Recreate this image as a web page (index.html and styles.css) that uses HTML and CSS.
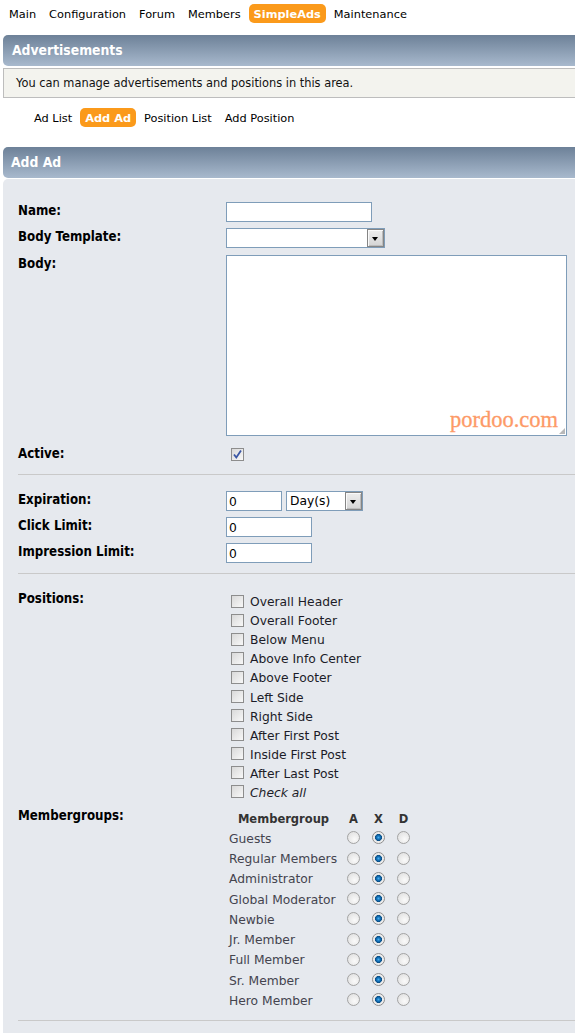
FILE: index.html
```html
<!DOCTYPE html>
<html>
<head>
<meta charset="utf-8">
<title>SimpleAds - Add Ad</title>
<link rel="stylesheet" href="styles.css">
</head>
<body>
<nav class="topnav">
  <a href="#">Main</a>
  <a href="#">Configuration</a>
  <a href="#">Forum</a>
  <a href="#">Members</a>
  <a href="#" class="active">SimpleAds</a>
  <a href="#">Maintenance</a>
</nav>
<div class="page">
  <h3 class="catbar">Advertisements</h3>
  <p class="info">You can manage advertisements and positions in this area.</p>
  <nav class="tabs">
    <a href="#">Ad List</a>
    <a href="#" class="active">Add Ad</a>
    <a href="#">Position List</a>
    <a href="#">Add Position</a>
  </nav>
  <h3 class="catbar catbar-sub">Add Ad</h3>
  <form class="panel">
    <div class="row">
      <label class="lbl">Name:</label>
      <input type="text" class="field w-name">
    </div>
    <div class="row row-gap7">
      <label class="lbl">Body Template:</label>
      <span class="select w-tpl"><span class="select-text"></span><span class="arrow"></span></span>
    </div>
    <div class="row row-gap9">
      <label class="lbl">Body:</label>
      <span class="area-wrap">
        <textarea class="area"></textarea>
        <span class="watermark">pordoo.com</span>
        <span class="grip"></span>
      </span>
    </div>
    <div class="row row-check">
      <label class="lbl">Active:</label>
      <span class="cb checked"><svg viewBox="0 0 11 11" width="11" height="11"><path d="M2 5.5 L4.3 8.5 L9 1.5" fill="none" stroke="#3a56a5" stroke-width="1.8"/></svg></span>
    </div>
    <hr class="sep sep1">
    <div class="row">
      <label class="lbl">Expiration:</label>
      <span class="inline">
        <input type="text" class="field w-exp" value="0">
        <span class="select w-unit"><span class="select-text">Day(s)</span><span class="arrow"></span></span>
      </span>
    </div>
    <div class="row">
      <label class="lbl">Click Limit:</label>
      <input type="text" class="field w-lim" value="0">
    </div>
    <div class="row row-last">
      <label class="lbl">Impression Limit:</label>
      <input type="text" class="field w-lim" value="0">
    </div>
    <hr class="sep sep2">
    <div class="row row-pos">
      <label class="lbl">Positions:</label>
      <ul class="poslist">
        <li><span class="cb"></span><span class="pt">Overall Header</span></li>
        <li><span class="cb"></span><span class="pt">Overall Footer</span></li>
        <li><span class="cb"></span><span class="pt">Below Menu</span></li>
        <li><span class="cb"></span><span class="pt">Above Info Center</span></li>
        <li><span class="cb"></span><span class="pt">Above Footer</span></li>
        <li><span class="cb"></span><span class="pt">Left Side</span></li>
        <li><span class="cb"></span><span class="pt">Right Side</span></li>
        <li><span class="cb"></span><span class="pt">After First Post</span></li>
        <li><span class="cb"></span><span class="pt">Inside First Post</span></li>
        <li><span class="cb"></span><span class="pt">After Last Post</span></li>
        <li><span class="cb"></span><em class="pt">Check all</em></li>
      </ul>
    </div>
    <div class="row row-mg">
      <label class="lbl">Membergroups:</label>
      <div class="mgtable">
        <div class="th th-name">Membergroup</div><div class="th">A</div><div class="th">X</div><div class="th">D</div>
        <div class="mg">Guests</div><div class="rc"><span class="rd"></span></div><div class="rc"><span class="rd on"></span></div><div class="rc"><span class="rd"></span></div>
        <div class="mg">Regular Members</div><div class="rc"><span class="rd"></span></div><div class="rc"><span class="rd on"></span></div><div class="rc"><span class="rd"></span></div>
        <div class="mg">Administrator</div><div class="rc"><span class="rd"></span></div><div class="rc"><span class="rd on"></span></div><div class="rc"><span class="rd"></span></div>
        <div class="mg">Global Moderator</div><div class="rc"><span class="rd"></span></div><div class="rc"><span class="rd on"></span></div><div class="rc"><span class="rd"></span></div>
        <div class="mg">Newbie</div><div class="rc"><span class="rd"></span></div><div class="rc"><span class="rd on"></span></div><div class="rc"><span class="rd"></span></div>
        <div class="mg">Jr. Member</div><div class="rc"><span class="rd"></span></div><div class="rc"><span class="rd on"></span></div><div class="rc"><span class="rd"></span></div>
        <div class="mg">Full Member</div><div class="rc"><span class="rd"></span></div><div class="rc"><span class="rd on"></span></div><div class="rc"><span class="rd"></span></div>
        <div class="mg">Sr. Member</div><div class="rc"><span class="rd"></span></div><div class="rc"><span class="rd on"></span></div><div class="rc"><span class="rd"></span></div>
        <div class="mg">Hero Member</div><div class="rc"><span class="rd"></span></div><div class="rc"><span class="rd on"></span></div><div class="rc"><span class="rd"></span></div>
      </div>
    </div>
    <hr class="sep sep3">
  </form>
</div>
</body>
</html>
```

FILE: styles.css
```css
html, body {
  margin: 0;
  padding: 0;
  background: #fff;
}
body {
  width: 575px;
  overflow: hidden;
  font-family: "DejaVu Sans", Verdana, sans-serif;
  color: #000;
}

/* top menu */
.topnav {
  display: flex;
  padding: 4px 0 0 4px;
  height: 19px;
  margin-bottom: 12px;
}
.topnav a, .tabs a {
  display: block;
  box-sizing: border-box;
  padding: 2px 5px 0;
  margin-right: 3px;
  line-height: 17px;
  height: 19px;
  font-size: 11.35px;
  color: #000;
  text-decoration: none;
  border-radius: 5px;
  white-space: nowrap;
}
.topnav a.active, .tabs a.active {
  background: #fb9a1b;
  color: #fff;
  font-weight: bold;
}

.page {
  margin-left: 3px;
  width: 600px;
}

/* category bars */
.catbar {
  margin: 0;
  height: 31px;
  line-height: 31px;
  padding-left: 9px;
  background: linear-gradient(#6d8198, #a8b9cd);
  color: #fff;
  font-family: "DejaVu Sans Condensed", "DejaVu Sans", sans-serif;
  font-stretch: condensed;
  font-size: 13.8px;
  font-weight: bold;
  border-radius: 5px 0 0 5px;
}
.catbar-sub {
  padding-left: 8px;
}

.info {
  margin: 2px 0 0;
  border: 1px solid #bdbdbd;
  border-right: 0;
  background: #f3f3ee;
  line-height: 27px;
  padding: 1px 0 0 12px;
  font-size: 11.4px;
  color: #111;
}

.tabs {
  display: flex;
  margin: 10px 0 20px;
  padding-left: 26px;
}

/* panel */
.panel {
  margin-top: 1px;
  background: #e6e9ee;
  padding: 23px 0 20px 15px;
  border-radius: 5px 0 0 0;
}
.row {
  display: flex;
  align-items: flex-start;
  margin-bottom: 6px;
}
.row-gap7 { margin-bottom: 7px; }
.row-gap9 { margin-bottom: 9px; }
.row-last { margin-bottom: 0; }
.lbl {
  flex: 0 0 208px;
  width: 208px;
  box-sizing: border-box;
  padding-top: 1px;
  line-height: 16px;
  font-family: "DejaVu Sans Condensed", "DejaVu Sans", sans-serif;
  font-stretch: condensed;
  font-weight: bold;
  font-size: 13.2px;
  color: #000;
}

.field {
  box-sizing: border-box;
  height: 20px;
  margin: 0;
  padding: 1px 2px 0;
  border: 1px solid #7f9db9;
  background: #fff;
  font-family: "DejaVu Sans", Verdana, sans-serif;
  font-size: 12.3px;
  color: #000;
  outline: none;
}
.w-name { width: 146px; }
.w-exp { width: 56px; }
.w-lim { width: 86px; }

.inline {
  display: flex;
  gap: 4px;
}

.select {
  position: relative;
  box-sizing: border-box;
  display: block;
  height: 20px;
  border: 1px solid #7f9db9;
  background: #fff;
  font-size: 12.3px;
  line-height: 19px;
}
.select-text {
  padding-left: 3px;
}
.w-tpl { width: 159px; }
.w-unit { width: 77px; }
.select .arrow {
  position: absolute;
  top: 0;
  right: 0;
  width: 17px;
  height: 18px;
  box-sizing: border-box;
  border: 1px solid #858585;
  box-shadow: inset 1px 1px 0 #fafafa, inset -1px -1px 0 #bcbcbc;
  background: linear-gradient(#eeeeee, #d4d4d4);
}
.select .arrow::after {
  content: "";
  position: absolute;
  left: 4px;
  top: 7px;
  border-left: 3.5px solid transparent;
  border-right: 3.5px solid transparent;
  border-top: 4px solid #000;
}

.area-wrap {
  position: relative;
  display: block;
}
.area {
  display: block;
  box-sizing: border-box;
  width: 341px;
  height: 181px;
  margin: 0;
  border: 1px solid #7f9db9;
  background: #fff;
  resize: none;
  outline: none;
}
.watermark {
  position: absolute;
  right: 9px;
  bottom: 3px;
  font-family: "Liberation Serif", "Times New Roman", serif;
  font-size: 22.5px;
  color: #fd9a67;
  -webkit-text-stroke: 0.3px #fd9a67;
}
.grip {
  position: absolute;
  right: 2px;
  bottom: 2px;
  width: 6px;
  height: 6px;
  background:
    radial-gradient(circle, #b8b8b8 0.8px, transparent 1px) 0 0 / 2px 2px;
  clip-path: polygon(100% 0, 100% 100%, 0 100%);
}

/* checkboxes */
.cb {
  display: inline-block;
  flex: 0 0 13px;
  box-sizing: border-box;
  width: 13px;
  height: 13px;
  border: 1px solid #8d8d8d;
  background: linear-gradient(135deg, #d9d9d9, #f8f8f8);
  vertical-align: middle;
}
.cb svg {
  display: block;
}
.row-check {
  height: 16px;
  margin-bottom: 0;
}
.row-check .cb {
  margin: 3px 0 0 5px;
}

.sep {
  border: 0;
  border-top: 1px solid #c9c9c9;
  height: 0;
  margin: 13px 0 16px;
}
.sep2 { margin-top: 10px; }
.sep3 { margin: 10px 0 0; }

.row-pos {
  margin-bottom: 5px;
}
.poslist {
  list-style: none;
  margin: 1.5px 0 0;
  padding: 0;
}
.poslist li {
  display: flex;
  align-items: center;
  height: 19.1px;
  font-size: 12.3px;
  color: #1c1c28;
  white-space: nowrap;
}
.poslist .pt {
  padding-top: 2px;
}
.poslist .cb {
  margin: 0 6px 0 5px;
}
.poslist em {
  font-style: italic;
}

/* membergroups */
.row-mg {
  margin-bottom: 0;
}
.mgtable {
  display: grid;
  grid-template-columns: 115px 25px 25px 25px;
  grid-auto-rows: 20.25px;
  margin-top: 1px;
  align-items: center;
}
.th {
  padding-top: 2px;
  text-align: center;
  font-weight: bold;
  font-size: 11.5px;
  color: #333;
}
.mg {
  padding: 2px 0 0 3px;
  font-size: 12.3px;
  color: #44444e;
  white-space: nowrap;
}
.rc {
  display: flex;
  justify-content: center;
}
.rd {
  display: block;
  box-sizing: border-box;
  width: 13px;
  height: 13px;
  border-radius: 50%;
  border: 1px solid #a3a3a3;
  background: radial-gradient(circle at 60% 65%, #fafafa, #dcdcdc);
}
.rd.on {
  border-color: #8e8e8e;
  background: radial-gradient(circle at 50% 50%, #4ab0ee 0, #1677c0 1.6px, #0b4f86 3.2px, #e9e9e9 3.8px, #f7f7f7 100%);
}
```
